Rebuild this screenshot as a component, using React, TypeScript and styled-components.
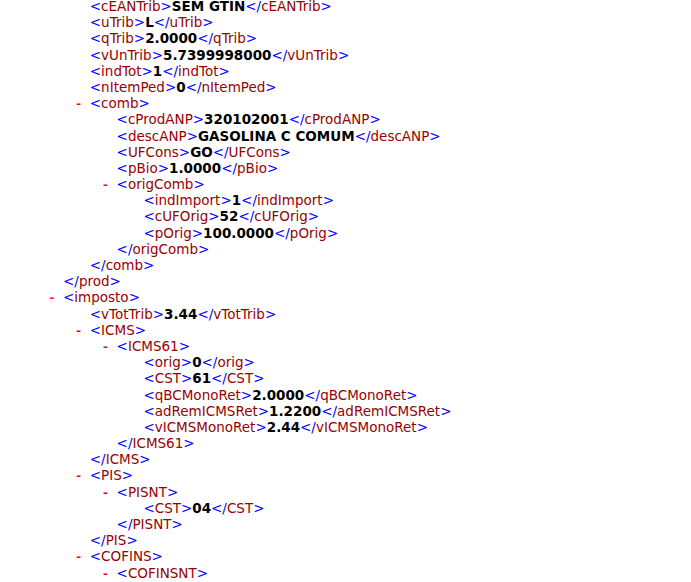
import React from "react";
import styled, { createGlobalStyle } from "styled-components";

const Global = createGlobalStyle`
  html, body { margin: 0; padding: 0; background: #ffffff; }
  body { font-family: "DejaVu Sans", Verdana, sans-serif; font-size: 13.5px; }
`;

const Viewer = styled.div`
  display: flex;
  flex-direction: column;
  margin-top: -2px;
  padding-left: 48px;
  font-family: "DejaVu Sans", Verdana, sans-serif;
  font-size: 13.5px;
  line-height: 16.2px;
  white-space: nowrap;
`;

const Row = styled.div<{ $depth: number }>`
  display: flex;
  align-items: baseline;
  height: 16.2px;
  padding-left: ${(p) => p.$depth * 26.8}px;
`;

const Toggle = styled.span`
  display: inline-block;
  width: 15px;
  flex: none;
  color: #ff0000;
  font-family: "Liberation Mono", "Courier New", monospace;
  font-size: 13px;
  font-weight: bold;
`;

const Mark = styled.span`
  color: #0000ff;
`;

const Name = styled.span`
  color: #990000;
`;

const Value = styled.span`
  color: #000000;
  font-weight: bold;
`;

type Line = { d: number; k: "open" | "leaf" | "close"; n: string; v?: string };

const lines: Line[] = [
  { d: 1, k: "leaf", n: "cEANTrib", v: "SEM GTIN" },
  { d: 1, k: "leaf", n: "uTrib", v: "L" },
  { d: 1, k: "leaf", n: "qTrib", v: "2.0000" },
  { d: 1, k: "leaf", n: "vUnTrib", v: "5.7399998000" },
  { d: 1, k: "leaf", n: "indTot", v: "1" },
  { d: 1, k: "leaf", n: "nItemPed", v: "0" },
  { d: 1, k: "open", n: "comb" },
  { d: 2, k: "leaf", n: "cProdANP", v: "320102001" },
  { d: 2, k: "leaf", n: "descANP", v: "GASOLINA C COMUM" },
  { d: 2, k: "leaf", n: "UFCons", v: "GO" },
  { d: 2, k: "leaf", n: "pBio", v: "1.0000" },
  { d: 2, k: "open", n: "origComb" },
  { d: 3, k: "leaf", n: "indImport", v: "1" },
  { d: 3, k: "leaf", n: "cUFOrig", v: "52" },
  { d: 3, k: "leaf", n: "pOrig", v: "100.0000" },
  { d: 2, k: "close", n: "origComb" },
  { d: 1, k: "close", n: "comb" },
  { d: 0, k: "close", n: "prod" },
  { d: 0, k: "open", n: "imposto" },
  { d: 1, k: "leaf", n: "vTotTrib", v: "3.44" },
  { d: 1, k: "open", n: "ICMS" },
  { d: 2, k: "open", n: "ICMS61" },
  { d: 3, k: "leaf", n: "orig", v: "0" },
  { d: 3, k: "leaf", n: "CST", v: "61" },
  { d: 3, k: "leaf", n: "qBCMonoRet", v: "2.0000" },
  { d: 3, k: "leaf", n: "adRemICMSRet", v: "1.2200" },
  { d: 3, k: "leaf", n: "vICMSMonoRet", v: "2.44" },
  { d: 2, k: "close", n: "ICMS61" },
  { d: 1, k: "close", n: "ICMS" },
  { d: 1, k: "open", n: "PIS" },
  { d: 2, k: "open", n: "PISNT" },
  { d: 3, k: "leaf", n: "CST", v: "04" },
  { d: 2, k: "close", n: "PISNT" },
  { d: 1, k: "close", n: "PIS" },
  { d: 1, k: "open", n: "COFINS" },
  { d: 2, k: "open", n: "COFINSNT" },
];

function Tag({ name, closing }: { name: string; closing?: boolean }) {
  return (
    <>
      <Mark>{closing ? "</" : "<"}</Mark>
      <Name>{name}</Name>
      <Mark>&gt;</Mark>
    </>
  );
}

function XmlLine({ line }: { line: Line }) {
  return (
    <Row $depth={line.d}>
      <Toggle>{line.k === "open" ? "-" : "\u00a0"}</Toggle>
      <Tag name={line.n} closing={line.k === "close"} />
      {line.k === "leaf" && (
        <>
          <Value>{line.v}</Value>
          <Tag name={line.n} closing />
        </>
      )}
    </Row>
  );
}

export default function App() {
  return (
    <>
      <Global />
      <Viewer>
        {lines.map((l, i) => (
          <XmlLine key={i} line={l} />
        ))}
      </Viewer>
    </>
  );
}
